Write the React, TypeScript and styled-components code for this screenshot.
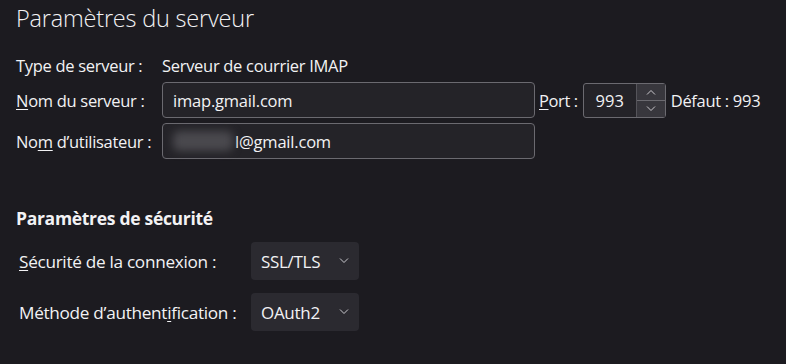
import React from 'react';
import styled, { createGlobalStyle } from 'styled-components';

const GlobalStyle = createGlobalStyle`
	html, body {
		margin: 0;
		padding: 0;
		background: #1c1b20;
		overflow: hidden;
	}
	body {
		font-family: 'Open Sans', 'Noto Sans', sans-serif;
		color: #f2f2f4;
	}
`;

const Page = styled.div`
	width: 786px;
	height: 364px;
	overflow: hidden;
	padding: 0 16px;
	box-sizing: border-box;
`;

const Title = styled.h1`
	margin: 0;
	padding-top: 2px;
	font-size: 23.5px;
	font-weight: 300;
	line-height: 32px;
	letter-spacing: -0.2px;
`;

const ServerGrid = styled.div`
	margin-top: 20px;
	display: grid;
	grid-template-columns: 146px 373px auto;
	row-gap: 5px;
	align-items: center;
	font-size: 16.5px;
`;

const Label = styled.label`
	white-space: nowrap;
	letter-spacing: -0.3px;
`;

const Key = styled.span`
	text-decoration: underline;
	text-underline-offset: 2px;
`;

const Value = styled.span`
	grid-column: 2 / 4;
	letter-spacing: -0.3px;
	height: 22px;
	line-height: 22px;
`;

const TextBox = styled.div`
	height: 34px;
	border: 1px solid #6b6a70;
	border-radius: 4px;
	background: #242328;
	display: flex;
	align-items: center;
	padding: 0 10px;
	font-size: 16.5px;
	letter-spacing: -0.2px;
`;

const Blurred = styled.span`
	display: inline-block;
	width: 60px;
	height: 20px;
	margin-right: 2px;
	border-radius: 6px;
	background: #4a494e;
	filter: blur(4px);
`;

const PortGroup = styled.div`
	display: flex;
	align-items: center;
	padding-left: 4px;
`;

const PortLabel = styled.span`
	margin-right: 5px;
	letter-spacing: -0.4px;
`;

const PortBox = styled.div`
	width: 81px;
	height: 33px;
	border: 1px solid #6b6a70;
	border-radius: 3px;
	background: #242328;
	display: flex;
	font-size: 16.5px;
`;

const PortValue = styled.div`
	flex: 1;
	display: flex;
	align-items: center;
	justify-content: center;
`;

const Spinner = styled.div`
	width: 28px;
	display: flex;
	flex-direction: column;
	background: #38373d;
	border-left: 1px solid #55545a;
`;

const SpinButton = styled.div<{ $top?: boolean }>`
	flex: 1;
	display: flex;
	align-items: center;
	justify-content: center;
	border-bottom: ${({ $top }) => ($top ? '1px solid #6b6a70' : 'none')};
`;

const DefaultText = styled.span`
	margin-left: 5px;
	letter-spacing: -0.3px;
`;

const SectionTitle = styled.h2`
	margin: 48px 0 0;
	font-size: 17.5px;
	font-weight: 700;
	line-height: 22px;
	letter-spacing: -0.3px;
`;

const SelectGrid = styled.div`
	margin-top: 13px;
	padding-left: 3px;
	display: grid;
	grid-template-columns: 232px 108px;
	row-gap: 13px;
	align-items: center;
	font-size: 17.2px;
`;

const Select = styled.div`
	height: 38px;
	border-radius: 4px;
	background: #2b2a30;
	display: flex;
	align-items: center;
	justify-content: space-between;
	padding: 0 10px 0 10px;
	font-size: 17px;
	letter-spacing: -0.3px;
`;

const NextTitle = styled.h2`
	margin: 30px 0 0;
	font-size: 17.5px;
	font-weight: 700;
	line-height: 22px;
	letter-spacing: -0.3px;
`;

const Chevron = ({ up, size = 10 }: { up?: boolean; size?: number }) => (
	<svg width={size} height={size * 0.6} viewBox="0 0 10 6" fill="none">
		<path
			d={up ? 'M1 5.5 L5 1.5 L9 5.5' : 'M1 0.5 L5 4.5 L9 0.5'}
			stroke="#c9c8cd"
			strokeWidth="1"
		/>
	</svg>
);

export default function App() {
	return (
		<Page>
			<GlobalStyle />
			<Title>Paramètres du serveur</Title>
			<ServerGrid>
				<Label>Type de serveur :</Label>
				<Value>Serveur de courrier IMAP</Value>

				<Label>
					<Key>N</Key>om du serveur :
				</Label>
				<TextBox>imap.gmail.com</TextBox>
				<PortGroup>
					<PortLabel>
						<Key>P</Key>ort :
					</PortLabel>
					<PortBox>
						<PortValue>993</PortValue>
						<Spinner>
							<SpinButton $top>
								<Chevron up />
							</SpinButton>
							<SpinButton>
								<Chevron />
							</SpinButton>
						</Spinner>
					</PortBox>
					<DefaultText>Défaut : 993</DefaultText>
				</PortGroup>

				<Label>
					No<Key>m</Key> d’utilisateur :
				</Label>
				<TextBox>
					<Blurred />l@gmail.com
				</TextBox>
			</ServerGrid>

			<SectionTitle>Paramètres de sécurité</SectionTitle>
			<SelectGrid>
				<Label>
					<Key>S</Key>écurité de la connexion :
				</Label>
				<Select>
					SSL/TLS
					<Chevron />
				</Select>

				<Label>
					Méthode d’authent<Key>i</Key>fication :
				</Label>
				<Select>
					OAuth2
					<Chevron />
				</Select>
			</SelectGrid>
			<NextTitle>Paramètres du serveur</NextTitle>
		</Page>
	);
}
